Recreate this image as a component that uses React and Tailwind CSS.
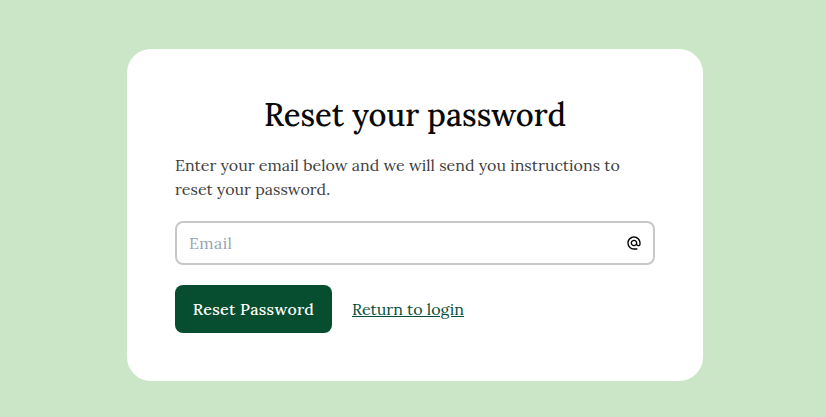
import { MdAlternateEmail } from "react-icons/md";

export default function App() {
  return (
    <main className="min-h-screen bg-[#cbe6c7] pt-[49px] pl-[127px] font-['Lora','Noto_Serif','Liberation_Serif',serif]">
      <section className="h-[332px] w-[576px] rounded-3xl bg-white p-12">
        <h1 className="h-9 scale-x-[0.97] text-center text-[32px] leading-9 font-medium whitespace-nowrap text-[#0a0a0a]">Reset your password</h1>
        <p className="mt-5 text-base leading-6 text-[#404040]">Enter your email below and we will send you instructions to<br />reset your password.</p>
        <div className="mt-5 flex h-11 items-center justify-between rounded-lg border-2 border-[#c8c8c8] pr-[11px] pl-3">
          <input type="email" placeholder="Email" className="min-w-0 flex-1 bg-transparent text-base tracking-[0.4px] outline-none placeholder:text-[#98a2b3]" />
          <MdAlternateEmail className="size-4 text-black" />
        </div>
        <div className="mt-5 flex items-center gap-5">
          <button className="h-12 w-[157px] rounded-lg bg-[#064e2f] text-base font-medium tracking-[0.3px] whitespace-nowrap text-white">Reset Password</button>
          <a className="text-base text-[#064e3b] underline">Return to login</a>
        </div>
      </section>
    </main>
  );
}
